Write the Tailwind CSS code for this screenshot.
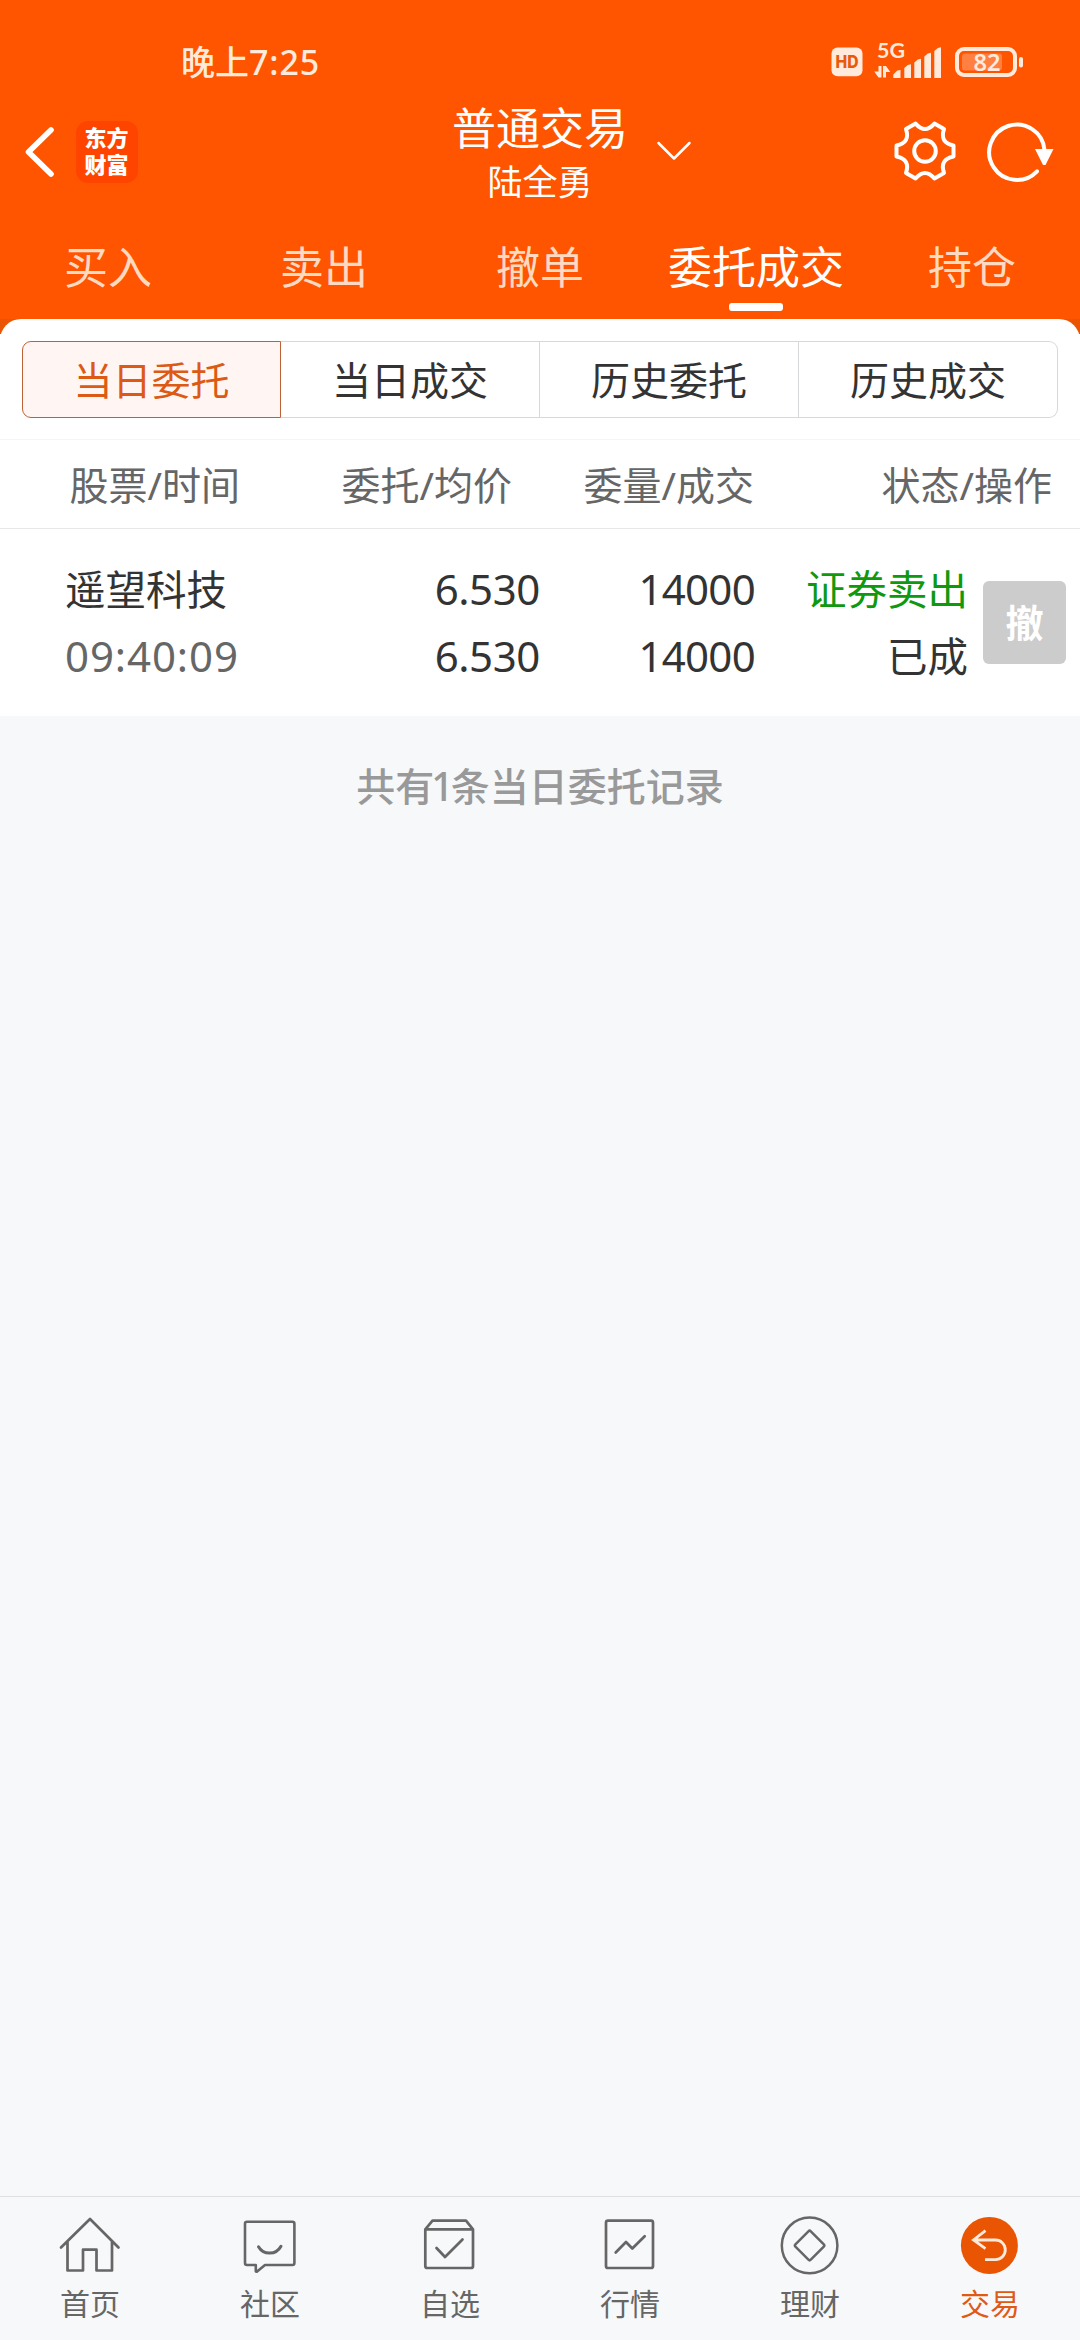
<!DOCTYPE html>
<html lang="zh-CN">
<head>
  <meta charset="UTF-8">
  <meta name="viewport" content="width=device-width, initial-scale=1.0">
  <title>普通交易</title>
  <script src="https://cdn.jsdelivr.net/npm/@tailwindcss/browser@4"></script>
</head>
<body class="bg-[#f6f8fa] font-['Noto_Sans','Noto_Sans_CJK_SC',sans-serif] text-[#333]">
<div class="w-[1080px] h-[2340px] flex flex-col overflow-hidden">

  <header class="h-[319px] shrink-0 bg-[#ff5500] text-white">
    <!-- Status bar -->
    <div class="h-24 pt-[30px] flex justify-between text-[#ffeadc]">
      <div class="ml-[181px] h-[66px] leading-[65px] text-[34px] font-medium whitespace-nowrap">晚上<span class="tracking-[0.9px]">7:25</span></div>
      <svg class="mr-[54px] -mt-[30px]" width="196" height="90" viewBox="830 0 196 90" fill="currentColor">
        <rect x="831.500" y="47.500" width="31" height="28.800" rx="6"/>
        <text x="847" y="68.300" text-anchor="middle" font-family="Inter" font-weight="800" font-size="17" fill="#e8590c" textLength="23" lengthAdjust="spacingAndGlyphs">HD</text>
        <text x="877" y="58" font-family="Lato" font-weight="700" font-size="21" textLength="28" lengthAdjust="spacingAndGlyphs">5G</text>
        <path d="M878.500 66h3v11.500h-3l-4.300-6h4.300zM883 66h3l4.300 6H886v5.500h-3z"/>
        <path d="M893.300 74.500l4-4 3.200-.5v8h-7.200zM904.300 68l3.500-3 3.200-.7V78h-6.700zM914.300 62.500l3.500-3 3.200-.7V78h-6.700zM924.300 56.500l3.500-3 3.200-.7V78h-6.700zM934.300 51l3.500-3 3.200-.7V78h-6.700z"/>
        <rect x="957" y="49" width="58" height="26" rx="7" fill="none" stroke="currentColor" stroke-width="4"/>
        <rect x="962" y="53.500" width="40" height="17" rx="3" fill="#ff8040"/>
        <rect x="1019" y="57" width="4" height="10.500" rx="2"/>
        <text x="987" y="70.800" text-anchor="middle" font-family="Noto Sans" font-weight="600" font-size="22.500" textLength="27" lengthAdjust="spacingAndGlyphs">82</text>
      </svg>
    </div>

    <!-- Title bar -->
    <div class="h-28 flex items-center">
      <svg class="ml-6" width="32" height="56" viewBox="0 0 32 56" fill="none" stroke="currentColor" stroke-width="5.600" stroke-linecap="round" stroke-linejoin="round"><path d="M27 6L4.500 28 27 50"/></svg>
      <div class="ml-5 w-[62px] h-[62px] rounded-[12px] bg-[#ff4400] flex flex-col items-center justify-center text-[22px] leading-[27px] font-black pr-[1px] pb-[2px]">
        <span>东方</span><span>财富</span>
      </div>
      <div class="ml-[314px] w-[176px] pt-[6px] text-center whitespace-nowrap">
        <h1 class="text-[44px] leading-[54px]">普通交易</h1>
        <p class="text-[35px] leading-[54px]">陆全勇</p>
      </div>
      <svg class="ml-7" width="36" height="24" viewBox="0 0 36 24" fill="none" stroke="currentColor" stroke-width="2.500" stroke-linecap="round" stroke-linejoin="round"><path d="M2.500 3L18 18.500 33.500 3"/></svg>
      <svg class="ml-auto mb-[2px]" width="64" height="64" viewBox="-32 -32 64 64" fill="none" stroke="currentColor" stroke-width="4" stroke-linejoin="round">
        <path d="M28.500 5.500Q14.400 8.300 19 21.900L9.400 27.400Q0 16.600-9.400 27.400L-19 21.900Q-14.400 8.300-28.500 5.500V-5.500Q-14.400-8.300-19-21.900L-9.400-27.400Q0-16.600 9.400-27.400L19-21.900Q14.400-8.300 28.500-5.500Z"/>
        <circle r="10.800"/>
      </svg>
      <svg class="ml-[27px] mr-6" width="72" height="64" viewBox="984 120 72 64" fill="none" stroke="currentColor" stroke-width="4" stroke-linecap="round">
        <path d="M1037 171.300A27.700 27.700 0 1 1 1044.500 150"/>
        <path d="M1035 149h18.500l-8 16h-2.500z" fill="currentColor" stroke="none"/>
      </svg>
    </div>

    <!-- Main tabs -->
    <nav class="grid grid-cols-5 pt-[30px] text-[44px] leading-[59px] text-center text-[#ffd9c2] whitespace-nowrap">
      <div>买入</div>
      <div>卖出</div>
      <div>撤单</div>
      <div class="text-white flex flex-col items-center">委托成交<span class="block mt-[6px] w-[54px] h-2 rounded-[3px] bg-white"></span></div>
      <div>持仓</div>
    </nav>
  </header>

  <section class="bg-[linear-gradient(#ea5504_15px,#fff_15px)]">
    <div class="bg-white rounded-t-[21px] h-[120px] px-[22px] pt-[22px]">
      <div class="flex h-[77px] text-[39px] leading-[77px] text-center">
        <div class="w-[259px] h-[77px] leading-[75px] border border-[#bd6236] bg-[#fff6f3] text-[#dc5a14] rounded-l-[9px]">当日委托</div>
        <div class="w-[259px] leading-[75px] border-y border-r border-[#d6d8da]">当日成交</div>
        <div class="w-[259px] leading-[75px] border-y border-r border-[#d6d8da]">历史委托</div>
        <div class="w-[259px] leading-[75px] border-y border-r border-[#d6d8da] rounded-r-[9px]">历史成交</div>
      </div>
    </div>
  </section>

  <!-- Order table -->
  <section class="bg-white h-[277px] shrink-0">
    <div class="h-[90px] border-y border-t-[#f5f5f5] border-b-[#e8e8e8] flex text-[39px] leading-[90px] text-[#666] whitespace-nowrap">
      <div class="w-[240px] text-right">股票/时间</div>
      <div class="w-[272px] text-right">委托/均价</div>
      <div class="w-[242px] text-right">委量/成交</div>
      <div class="w-[298px] text-right">状态/操作</div>
    </div>
    <div class="flex pt-[27px] text-[42px] leading-[65px] whitespace-nowrap">
      <div class="w-[300px] pl-[65px]">
        <p class="text-[40.5px] leading-[67px]">遥望科技</p>
        <p class="text-[#666] tracking-[0.9px]">09:40:09</p>
      </div>
      <div class="w-[240px] text-right tracking-[-0.4px]"><p class="mb-[2px]">6.530</p><p>6.530</p></div>
      <div class="w-[215px] text-right tracking-[-0.7px]"><p class="mb-[2px]">14000</p><p>14000</p></div>
      <div class="w-[213px] text-right text-[40.5px] leading-[67px]"><p class="text-[#0f990f]">证券卖出</p><p>已成</p></div>
      <button class="ml-[15px] mt-[25px] w-[83px] h-[83px] rounded-[6px] bg-[#ccc] text-white text-[38px] leading-[83px] font-bold">撤</button>
    </div>
  </section>

  <p class="mt-[40px] text-center text-[39px] leading-[60px] font-medium text-[#999]">共有<span class="-mx-[3px]">1</span>条当日委托记录</p>

  <!-- Bottom navigation -->
  <nav class="mt-auto h-36 shrink-0 border-t border-[#dedfe1] bg-[#f7f8fa] grid grid-cols-6 text-[30px] leading-[40px] text-[#666] text-center">
    <div class="flex flex-col items-center pt-[16px]">
      <svg width="64" height="64" viewBox="58 2213 64 64" fill="none" stroke="currentColor" stroke-width="2.700" stroke-linecap="round" stroke-linejoin="round"><path d="M61 2247.500L90 2219l28.500 28.500M67.500 2242v28.500H83v-20.800h13.500v20.800H112V2242"/></svg>
      <span class="mt-[7px]">首页</span>
    </div>
    <div class="flex flex-col items-center pt-[16px]">
      <svg width="64" height="64" viewBox="238 2213 64 64" fill="none" stroke="currentColor" stroke-width="2.600" stroke-linecap="round" stroke-linejoin="round"><path d="M247 2221.700h45.400q2 0 2 2V2263q0 2-2 2H265l-8.200 6.700-1-.2V2265H247q-2 0-2-2v-39.300q0-2 2-2z"/><path d="M258.500 2246.700c5 8.600 17.500 8.600 22.500-.5" stroke-width="3"/></svg>
      <span class="mt-[7px]">社区</span>
    </div>
    <div class="flex flex-col items-center pt-[16px]">
      <svg width="64" height="64" viewBox="418 2213 64 64" fill="none" stroke="currentColor" stroke-width="2.700" stroke-linecap="round" stroke-linejoin="round"><path d="M425.300 2229.300l7.200-8.600H466l7 8.600V2266q0 2-2 2h-43.700q-2 0-2-2zM425.300 2229.300H473M436.500 2248l8.500 9 17.500-17.500"/></svg>
      <span class="mt-[7px]">自选</span>
    </div>
    <div class="flex flex-col items-center pt-[16px]">
      <svg width="64" height="64" viewBox="598 2213 64 64" fill="none" stroke="currentColor" stroke-width="2.700" stroke-linecap="round" stroke-linejoin="round"><rect x="606" y="2220.700" width="47" height="47.300" rx="2"/><path d="M615.700 2252.500L626 2242l6.300 6.500 12.400-12.300"/></svg>
      <span class="mt-[7px]">行情</span>
    </div>
    <div class="flex flex-col items-center pt-[16px]">
      <svg width="64" height="64" viewBox="778 2213 64 64" fill="none" stroke="currentColor" stroke-width="2.500" stroke-linejoin="round"><circle cx="809.600" cy="2245.400" r="27.800"/><path d="M808.400 2231.300q1.200-1.200 2.400 0l13 13q1.200 1.200 0 2.400l-13 13q-1.200 1.200-2.400 0l-13-13q-1.200-1.200 0-2.400z"/></svg>
      <span class="mt-[7px]">理财</span>
    </div>
    <div class="flex flex-col items-center pt-[16px] text-[#df5a14]">
      <svg width="64" height="64" viewBox="958 2213 64 64" fill="none" stroke="#ffeadb" stroke-width="2.800"><circle cx="989.400" cy="2245.400" r="28.500" fill="#ea5504" stroke="none"/><path d="M985.500 2230.700l-12 9.300 12 8.700M973.500 2240H995.500a9.800 9.800 0 0 1 0 19.600H985"/></svg>
      <span class="mt-[7px]">交易</span>
    </div>
  </nav>
</div>
</body>
</html>
